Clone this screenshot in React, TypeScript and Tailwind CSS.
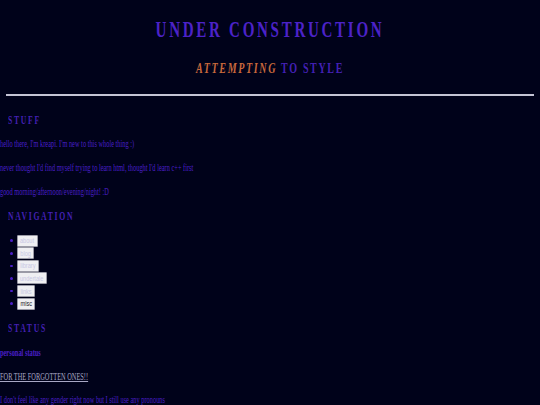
const navItems = [
  { label: 'about', width: 'w-[20.5px]', text: 'text-[#c8c8e4]' },
  { label: 'blog', width: 'w-[17px]', text: 'text-[#c8c8e4]' },
  { label: 'library', width: 'w-[22px]', text: 'text-[#c8c8e4]' },
  { label: 'undertale', width: 'w-[30px]', text: 'text-[#c8c8e4]' },
  { label: 'links', width: 'w-[18px]', text: 'text-[#c8c8e4]' },
  { label: 'misc', width: 'w-[18px]', text: 'text-[#222222]' },
];

function SectionTitle({ children }: { children: string }) {
  return (
    <h2 className="ml-2 origin-left scale-x-[0.67] text-[11.5px] leading-3 font-bold tracking-[2.5px] whitespace-nowrap text-[#4320b4]">
      {children}
    </h2>
  );
}

function Line({ className, children }: { className: string; children: string }) {
  return <p className={`origin-left scale-x-[0.67] whitespace-nowrap ${className}`}>{children}</p>;
}

export default function App() {
  return (
    <div className="h-[405px] overflow-hidden bg-[#00021a] font-['Liberation_Serif',serif] text-[9.5px] leading-[10px] text-[#4a1fc8]">
      {/* Header */}
      <header className="pt-[18px] text-center">
        <h1 className="scale-x-[0.67] text-[22.5px] leading-6 font-bold tracking-[4px] whitespace-nowrap text-[#4c22c8]">
          UNDER CONSTRUCTION
        </h1>
        <p className="mt-[18px] scale-x-[0.67] text-[15px] leading-4 font-bold tracking-[2.45px] whitespace-nowrap text-[#4320b4]">
          <em className="text-[#c8683c]">ATTEMPTING</em> TO STYLE
        </p>
      </header>
      <hr className="mx-[6px] mt-[18px] h-[2px] border-0 bg-[#c4c4d4]" />

      {/* Stuff */}
      <section className="mt-[18px]">
        <SectionTitle>STUFF</SectionTitle>
        <Line className="mt-[13px]">hello there, I'm kreapi. I'm new to this whole thing :)</Line>
        <Line className="mt-[14px]">never thought I'd find myself trying to learn html, thought I'd learn c++ first</Line>
        <Line className="mt-[13.5px]">good morning/afternoon/evening/night! :D</Line>
      </section>

      {/* Navigation */}
      <section className="mt-[13.5px]">
        <SectionTitle>NAVIGATION</SectionTitle>
        <ul className="mt-[12.4px] pl-[10px]">
          {navItems.map((item) => (
            <li key={item.label} className="flex h-[12.6px] items-center">
              <span className="h-[2.5px] w-[2.5px] rounded-full bg-[#4a1fc8]" />
              <button
                className={`ml-[4.5px] flex h-[12px] items-center justify-center rounded-[1px] border border-[#9a9aa6] bg-[#efeff2] font-['Liberation_Sans',sans-serif] text-[8px] leading-[9px] ${item.width} ${item.text}`}
              >
                <span className="inline-block scale-x-[0.7]">{item.label}</span>
              </button>
            </li>
          ))}
        </ul>
      </section>

      {/* Status */}
      <section className="mt-[12px]">
        <SectionTitle>STATUS</SectionTitle>
        <Line className="mt-[14px] font-bold">personal status</Line>
        <Line className="mt-[14px] text-[#a8a8c4] underline">FOR THE FORGOTTEN ONES!!</Line>
        <Line className="mt-[13px]">I don't feel like any gender right now but I still use any pronouns</Line>
      </section>
    </div>
  );
}
